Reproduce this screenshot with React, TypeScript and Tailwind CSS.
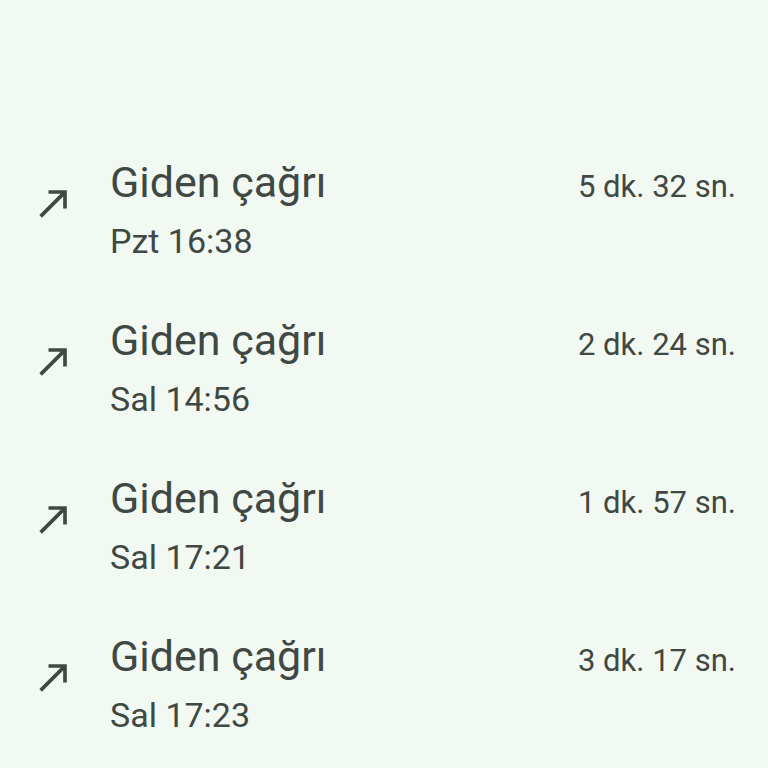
const calls = [
  { title: "Giden çağrı", time: "Pzt 16:38", dur: "5 dk. 32 sn." },
  { title: "Giden çağrı", time: "Sal 14:56", dur: "2 dk. 24 sn." },
  { title: "Giden çağrı", time: "Sal 17:21", dur: "1 dk. 57 sn." },
  { title: "Giden çağrı", time: "Sal 17:23", dur: "3 dk. 17 sn." },
];

function CallMade() {
  return (
    <svg viewBox="0 0 24 24" className="h-[44px] w-[44px]" fill="#3f4843">
      <path d="M9 5v2h6.59L4 18.59 5.41 20 17 8.41V15h2V5z" />
    </svg>
  );
}

export default function App() {
  return (
    <div
      className="h-[768px] w-[768px] overflow-hidden bg-[#f1f9f2] pt-[158px] text-[#3f4843]"
      style={{ fontFamily: "Roboto, 'Noto Sans', sans-serif" }}
    >
      {calls.map((c, i) => (
        <div key={i} className="flex h-[158px] items-start">
          <div className="w-[110px] pl-[32px] pt-[23px]">
            <CallMade />
          </div>
          <div className="flex flex-1 flex-col pr-[32px]">
            <div className="flex items-baseline justify-between">
              <span className="text-[43px] leading-[48px]">{c.title}</span>
              <span className="text-[31px] leading-[48px]">{c.dur}</span>
            </div>
            <div className="mt-[10px] text-[34px] leading-[40px]">{c.time}</div>
          </div>
        </div>
      ))}
    </div>
  );
}
